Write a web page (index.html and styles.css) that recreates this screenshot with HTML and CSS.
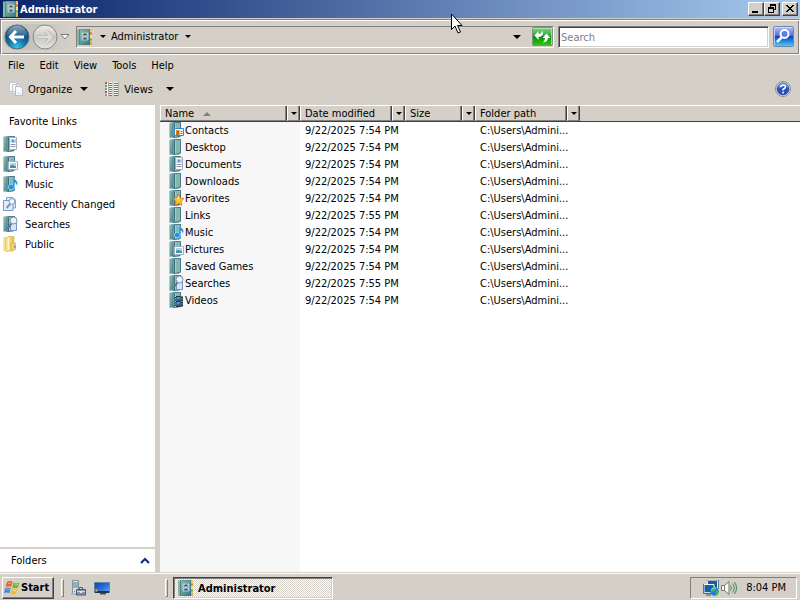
FILE: index.html
```html
<!DOCTYPE html>
<html lang="en">
<head>
<meta charset="utf-8">
<title>Administrator</title>
<link rel="stylesheet" href="styles.css">
</head>
<body>
<svg class="sprites" aria-hidden="true">
  <defs>
    <linearGradient id="teal" x1="0" y1="0" x2="1" y2="1"><stop offset="0" stop-color="#8dbdb2"/><stop offset=".5" stop-color="#5f9d93"/><stop offset="1" stop-color="#3f7088"/></linearGradient>
    <linearGradient id="teal2" x1="0" y1="0" x2="1" y2="1"><stop offset="0" stop-color="#86b3c0"/><stop offset="1" stop-color="#7fbd9c"/></linearGradient>
    <linearGradient id="yellow" x1="0" y1="0" x2="1" y2="0"><stop offset="0" stop-color="#fff0a8"/><stop offset="1" stop-color="#e6bf45"/></linearGradient>
    <radialGradient id="ball" cx=".5" cy=".95" r=".9"><stop offset="0" stop-color="#35c8ee"/><stop offset=".45" stop-color="#126fa5"/><stop offset="1" stop-color="#0b3768"/></radialGradient>
    <linearGradient id="shine" x1="0" y1="0" x2="0" y2="1"><stop offset="0" stop-color="#fff" stop-opacity=".85"/><stop offset="1" stop-color="#fff" stop-opacity=".15"/></linearGradient>
    <linearGradient id="grayball" x1="0" y1="0" x2="0" y2="1"><stop offset="0" stop-color="#eeeeec"/><stop offset=".5" stop-color="#c9c8c4"/><stop offset="1" stop-color="#e2e2df"/></linearGradient>
    <linearGradient id="green" x1="0" y1="0" x2="0" y2="1"><stop offset="0" stop-color="#82d982"/><stop offset=".45" stop-color="#2da83a"/><stop offset=".5" stop-color="#068a10"/><stop offset="1" stop-color="#35c516"/></linearGradient>
    <linearGradient id="blue" x1="0" y1="0" x2="0" y2="1"><stop offset="0" stop-color="#b4c4fa"/><stop offset=".45" stop-color="#4f70de"/><stop offset=".5" stop-color="#143cc4"/><stop offset="1" stop-color="#46d8f6"/></linearGradient>
    <linearGradient id="screen" x1="0" y1="0" x2="1" y2="1"><stop offset="0" stop-color="#123f9c"/><stop offset=".6" stop-color="#2e75dc"/><stop offset="1" stop-color="#6eb4f4"/></linearGradient>
    <g id="book">
      <path d="M0 1 3 0h9v14l-2 1.500H0z" fill="url(#teal)"/>
      <path d="M.5 1v14" stroke="#a5cfc2"/>
      <path d="M4 2 6 .5h5.500v13.500L6 15.500H4z" fill="url(#teal2)" stroke="#466f8c" stroke-width=".8"/>
      <path d="M5.500 1.500v13.500" stroke="#3d6d84"/><path d="M6.500 1.500v13" stroke="#b0d5c8" stroke-width=".7"/>
    </g>
  </defs>
  <symbol id="i-folder" viewBox="0 0 16 16"><use href="#book"/></symbol>
  <symbol id="i-contacts" viewBox="0 0 16 16">
    <use href="#book"/>
    <path d="M5.500 6.500h9v7h-9z" fill="#f5fbff" stroke="#2d8fd0"/><path d="M7 8h3.500v4.500H7z" fill="#f29420"/><path d="M8 9h1.500v1.500H8zM7 11.500h3.500v1H7z" fill="#7a4010"/><path d="M11.500 9.500h2m-2 2h2" stroke="#3f86bc"/>
  </symbol>
  <symbol id="i-documents" viewBox="0 0 16 16">
    <use href="#book"/>
    <path d="M6.500 1.500h7v12h-7z" fill="#fff" stroke="#a9adb8"/><path d="M7.500 4h2M7.500 6h1.500M7.500 8.500h5M7.500 10.500h5M12 4h1M12 6h1" stroke="#8b92a8"/><path d="M9 3.500h2.500v3H9z" fill="#4b9fe2"/>
  </symbol>
  <symbol id="i-pictures" viewBox="0 0 16 16">
    <use href="#book"/>
    <path d="M5.500 5.500h9v8h-9z" fill="#fff" stroke="#a4adb8"/><path d="M7 7h6v5H7z" fill="#a8d5f3"/><path d="M7 9.500 10 9l3 1.500V12H7z" fill="#4a8f98"/>
  </symbol>
  <symbol id="i-music" viewBox="0 0 16 16">
    <use href="#book"/>
    <ellipse cx="8.500" cy="11" rx="3.200" ry="2.800" fill="#1596e6" stroke="#bee3fb" stroke-width=".7"/><path d="M10 11V1.500c1 2 4.500 3 4.500 5.500 0 1-.5 2-1 2.500 0-2-1-3-2-3V11z" fill="#168fdd" stroke="#bee3fb" stroke-width=".4"/>
  </symbol>
  <symbol id="i-searches" viewBox="0 0 16 16">
    <use href="#book"/>
    <path d="M7.500 6.500h6v8h-6z" fill="#d7e5f9" stroke="#7394cb"/><path d="M8.500 7.500 4.500 12.500" stroke="#60708c" stroke-width="2"/><circle cx="10.500" cy="4.500" r="3.500" fill="#e8f3fb" stroke="#7c8ba6"/>
  </symbol>
  <symbol id="i-recent" viewBox="0 0 16 16">
    <path d="M3.500 1.500H10l2.500 2.500v8h-9z" fill="#d8e8fb" stroke="#7fa3d4"/><path d="M.5 4.500H8l2 3v7H.500z" fill="#e1edfc" stroke="#7498cf"/><path d="M7.500 7.500 3.500 12" stroke="#8393ad" stroke-width="2"/><circle cx="9" cy="5.500" r="2.800" fill="#f3f8fd" stroke="#8c9bb5"/>
  </symbol>
  <symbol id="i-public" viewBox="0 0 16 16">
    <path d="M0 1h5v14H0z" fill="url(#yellow)"/><path d="M3 2.500 5 .5h6v13L5 15.500H3z" fill="url(#yellow)" stroke="#ddba4a" stroke-width=".7"/><path d="M8 7h4.500v6.500L8 15.500z" fill="#f2d269" stroke="#d8ad38" stroke-width=".7"/><path d="M5.500 2v12" stroke="#fff9d6"/><path d="M11 9.500h1.500V12H11z" fill="#58a5d6"/>
  </symbol>
  <symbol id="i-favorites" viewBox="0 0 16 16">
    <use href="#book"/>
    <path d="m9.500 4 1.600 3.900 3.900.5-2.900 2.900.8 4-3.400-2-3.400 2 .8-4L4 8.400l3.900-.5z" fill="#ffc52e" stroke="#e8781c" stroke-width=".9"/><path d="m9.500 6 .8 2.700-2.800.5z" fill="#fff0a0"/>
  </symbol>
  <symbol id="i-videos" viewBox="0 0 16 16">
    <use href="#book"/>
    <path d="M6 4h8v11H6z" fill="#283747"/><path d="M7.500 5h4v4h-4zM7.500 10h4v4h-4z" fill="#5796cb"/><path d="M7.500 8l4-2v3h-4zM7.500 13l4-2v3h-4z" fill="#315c83"/><path d="M13 4v11M6.500 4v11" stroke="#d5e2e8" stroke-dasharray="1 1.500"/>
  </symbol>
  <symbol id="i-user" viewBox="0 0 16 16">
    <path d="M0 .5h3V16H0z" fill="#86b8a8"/><path d="M2.500 0H13v16H2.500z" fill="url(#teal)" stroke="#36697c" stroke-width=".6"/>
    <path d="M5 4h6v7H5z" fill="#8fc0dc" stroke="#c4dcde" stroke-width=".8"/><circle cx="8" cy="6.800" r="1.500" fill="#dcc19c"/><path d="M6.300 6.500q0-2 1.700-2t1.700 2q-1.700-1.200-3.400 0z" fill="#43392c"/><path d="M5.800 10.500q2.200-4 4.400 0z" fill="#2d5a88"/>
    <path d="M13 0h2v3h-2z" fill="#e1ca45"/><path d="M13 3h2v3h-2z" fill="#e46a3b"/><path d="M13 6h2v3h-2z" fill="#f3dd59"/><path d="M13 9h2v3h-2z" fill="#57b757"/><path d="M13 12h2v4h-2z" fill="#e0ae35"/><path d="M13.500 3h1.500M13.500 6h1.500M13.500 9h1.500M13.500 12h1.500" stroke="#fff" stroke-width=".7"/>
  </symbol>
  <symbol id="i-down" viewBox="0 0 8 4"><path d="M0 0h8L4 4z"/></symbol>
  <symbol id="i-smalldown" viewBox="0 0 6 3"><path d="M0 0h6L3 3z"/></symbol>
</svg>

<div class="desktop">
  <main class="window">
    <header class="titlebar">
      <svg class="icon"><use href="#i-user"/></svg>
      <h1>Administrator</h1>
      <div class="caption-buttons">
        <button class="caption raised" aria-label="Minimize"><svg viewBox="0 0 12 10" width="12" height="10" shape-rendering="crispEdges"><path d="M2 7h6v2H2z"/></svg></button>
        <button class="caption raised" aria-label="Restore"><svg viewBox="0 0 12 10" width="12" height="10" shape-rendering="crispEdges"><path d="M4 0h6v6H8V5h1V2H5v1H4zM2 3h6v6H2zM3 5v3h4V5z" fill-rule="evenodd"/></svg></button>
        <button class="caption raised close" aria-label="Close"><svg viewBox="0 0 12 10" width="12" height="10" shape-rendering="crispEdges"><path d="M2 1h2v1h1v1h2V2h1V1h2v1H9v1H8v1H7v1h1v1h1v1h1v1H8V7H7V6H5v1H4v1H2V7h1V6h1V5h1V4H4V3H3V2H2z"/></svg></button>
      </div>
    </header>

    <nav class="navigation" aria-label="Address">
      <div class="travel">
        <button class="plain" aria-label="Back"><svg width="26" height="26" viewBox="0 0 26 26"><circle cx="13" cy="13" r="12" fill="url(#ball)" stroke="#526c84"/><path d="M2.500 12a10.500 10.500 0 0 1 21 0q-10.500-3-21 0z" fill="url(#shine)" opacity=".65"/><path d="M12 7 6.500 13l5.500 6M7 13h13" fill="none" stroke="#fff" stroke-width="3"/></svg></button>
        <button class="plain" aria-label="Forward"><svg width="26" height="26" viewBox="0 0 26 26"><circle cx="13" cy="13" r="12" fill="url(#grayball)" stroke="#85878a"/><path d="m14 7 5.500 6-5.500 6M19 13H6" fill="none" stroke="#b4b3b0" stroke-width="4"/><path d="m14 7 5.500 6-5.500 6M19 13H6" fill="none" stroke="#dddcd9" stroke-width="2.500"/></svg></button>
        <button class="plain" aria-label="Recent pages"><svg width="10" height="6" viewBox="0 0 10 6"><path d="M1 .5h8L5 5z" fill="#fff" stroke="#77777c"/></svg></button>
      </div>
      <div class="address">
        <svg class="icon"><use href="#i-user"/></svg>
        <button class="plain" aria-label="Locations"><svg class="smalldown"><use href="#i-smalldown"/></svg></button>
        <a href="#">Administrator</a>
        <button class="plain" aria-label="Subfolders"><svg class="smalldown"><use href="#i-smalldown"/></svg></button>
        <button class="plain previous" aria-label="Previous locations"><svg class="down"><use href="#i-down"/></svg></button>
        <button class="plain" aria-label="Refresh"><svg width="21" height="19" viewBox="0 0 21 19"><rect x=".5" y=".5" width="20" height="18" rx="1" fill="url(#green)" stroke="#7a967a"/><path d="M1.500 1.500h18v16" fill="none" stroke="#c4f0c0" stroke-opacity=".7"/><path d="M2.500 8.500 6.500 4v3Q10 7 10.500 3 12.500 10 6.500 10v3zM18.500 11 14.500 6.500 10.500 11h2.500q0 2.500-2 4.500 4.500-.5 5-4.500z" fill="#fff"/></svg></button>
      </div>
      <input class="search sunken" type="search" placeholder="Search" aria-label="Search">
      <button class="plain" aria-label="Start search"><svg width="21" height="21" viewBox="0 0 21 21"><rect x=".5" y=".5" width="20" height="20" rx="1.500" fill="url(#blue)" stroke="#7784ab"/><path d="M1.500 19.500v-18h18" fill="none" stroke="#e1e9ff" stroke-opacity=".7"/><path d="M8.500 11.500 4 16" stroke="#fff" stroke-width="2.500"/><circle cx="11.500" cy="8" r="4" fill="#5a82dc" stroke="#fff" stroke-width="2"/></svg></button>
    </nav>

    <nav class="menubar" aria-label="Menu">
      <button class="plain">File</button><button class="plain">Edit</button><button class="plain">View</button><button class="plain">Tools</button><button class="plain">Help</button>
    </nav>

    <div class="toolbar">
      <button class="plain tool organize"><svg class="icon" viewBox="0 0 16 16"><path d="M1.500 1.500h7v9h-7zM4.500 3.500h7v9h-7z" fill="#f5f8fc" stroke="#c1c9d0"/><path d="M7.500 5.500h5l2 2v7h-7z" fill="#f5f9fd" stroke="#b2bdc9"/><path d="M9 12.500h4" stroke="#d2deea"/></svg><span>Organize</span><svg class="down"><use href="#i-down"/></svg></button>
      <button class="plain tool"><svg class="icon views" viewBox="0 0 16 16"><path d="M3 1h12v14H3z" fill="#f5f5f1"/><path d="M5 2.500h3M5 4.500h3M5 6.500h3M5 8.500h3M5 10.500h3M5 12.500h3M5 14.500h3M10 2.500h4M10 4.500h4M10 6.500h4M10 8.500h4M10 10.500h4M10 12.500h4M10 14.500h4" stroke="#77776f"/><path d="M4.500 1v14M9 1v14M14.500 1v14" stroke="#b0aca2"/><path d="M1 1h2v2H1zM1 10h2v2H1z" fill="#c9514b"/><path d="M1 4h2v2H1z" fill="#5cab69"/><path d="M1 7h2v2H1zM1 13h2v2H1z" fill="#6aa1c4"/></svg><span>Views</span><svg class="down far"><use href="#i-down"/></svg></button>
      <button class="plain help" aria-label="Help"><svg width="16" height="16" viewBox="0 0 16 16"><circle cx="8" cy="8" r="7.500" fill="#f2f2f3" stroke="#8a8b91"/><circle cx="8" cy="8" r="6" fill="#2751bb" stroke="#18388a" stroke-width=".7"/><path d="M2.500 7a5.500 5.500 0 0 1 11 0q-5-2-11 0z" fill="#7494df" opacity=".7"/><path d="M5.700 6.200q0-2.200 2.400-2.200t2.300 1.900Q10.400 7.200 8.100 8.300v1.200M8.100 10.800v1.700" fill="none" stroke="#fff" stroke-width="1.600"/></svg></button>
    </div>

    <div class="content">
      <aside class="sidebar">
        <h2>Favorite Links</h2>
        <ul>
          <li><a href="#"><svg class="icon"><use href="#i-documents"/></svg>Documents</a></li>
          <li><a href="#"><svg class="icon"><use href="#i-pictures"/></svg>Pictures</a></li>
          <li><a href="#"><svg class="icon"><use href="#i-music"/></svg>Music</a></li>
          <li><a href="#"><svg class="icon"><use href="#i-recent"/></svg>Recently Changed</a></li>
          <li><a href="#"><svg class="icon"><use href="#i-searches"/></svg>Searches</a></li>
          <li><a href="#"><svg class="icon"><use href="#i-public"/></svg>Public</a></li>
        </ul>
        <button class="plain folders"><span>Folders</span><svg width="10" height="7" viewBox="0 0 10 7"><path d="m1 6 4-4 4 4" fill="none" stroke="#0b2c8c" stroke-width="2"/></svg></button>
      </aside>
      <section class="files" aria-label="Files">
        <table>
          <colgroup><col class="c-name"><col class="c-date"><col class="c-size"><col class="c-path"><col></colgroup>
          <thead>
            <tr>
              <th><div class="heading"><button class="sort">Name<svg class="sorted" viewBox="0 0 8 4"><path d="M0 4h8L4 0z"/></svg></button><button class="filter" aria-label="Filter by name"><svg class="smalldown"><use href="#i-smalldown"/></svg></button></div></th>
              <th><div class="heading"><button class="sort">Date modified</button><button class="filter" aria-label="Filter by date"><svg class="smalldown"><use href="#i-smalldown"/></svg></button></div></th>
              <th><div class="heading"><button class="sort">Size</button><button class="filter" aria-label="Filter by size"><svg class="smalldown"><use href="#i-smalldown"/></svg></button></div></th>
              <th><div class="heading"><button class="sort">Folder path</button><button class="filter" aria-label="Filter by path"><svg class="smalldown"><use href="#i-smalldown"/></svg></button></div></th>
              <td><div class="heading"></div></td>
            </tr>
          </thead>
          <tbody>
            <tr><td><div class="file"><svg class="icon"><use href="#i-contacts"/></svg>Contacts</div></td><td>9/22/2025 7:54 PM</td><td></td><td>C:\Users\Admini...</td><td></td></tr>
            <tr><td><div class="file"><svg class="icon"><use href="#i-folder"/></svg>Desktop</div></td><td>9/22/2025 7:54 PM</td><td></td><td>C:\Users\Admini...</td><td></td></tr>
            <tr><td><div class="file"><svg class="icon"><use href="#i-documents"/></svg>Documents</div></td><td>9/22/2025 7:54 PM</td><td></td><td>C:\Users\Admini...</td><td></td></tr>
            <tr><td><div class="file"><svg class="icon"><use href="#i-folder"/></svg>Downloads</div></td><td>9/22/2025 7:54 PM</td><td></td><td>C:\Users\Admini...</td><td></td></tr>
            <tr><td><div class="file"><svg class="icon"><use href="#i-favorites"/></svg>Favorites</div></td><td>9/22/2025 7:54 PM</td><td></td><td>C:\Users\Admini...</td><td></td></tr>
            <tr><td><div class="file"><svg class="icon"><use href="#i-folder"/></svg>Links</div></td><td>9/22/2025 7:55 PM</td><td></td><td>C:\Users\Admini...</td><td></td></tr>
            <tr><td><div class="file"><svg class="icon"><use href="#i-music"/></svg>Music</div></td><td>9/22/2025 7:54 PM</td><td></td><td>C:\Users\Admini...</td><td></td></tr>
            <tr><td><div class="file"><svg class="icon"><use href="#i-pictures"/></svg>Pictures</div></td><td>9/22/2025 7:54 PM</td><td></td><td>C:\Users\Admini...</td><td></td></tr>
            <tr><td><div class="file"><svg class="icon"><use href="#i-folder"/></svg>Saved Games</div></td><td>9/22/2025 7:54 PM</td><td></td><td>C:\Users\Admini...</td><td></td></tr>
            <tr><td><div class="file"><svg class="icon"><use href="#i-searches"/></svg>Searches</div></td><td>9/22/2025 7:55 PM</td><td></td><td>C:\Users\Admini...</td><td></td></tr>
            <tr><td><div class="file"><svg class="icon"><use href="#i-videos"/></svg>Videos</div></td><td>9/22/2025 7:54 PM</td><td></td><td>C:\Users\Admini...</td><td></td></tr>
          </tbody>
        </table>
      </section>
    </div>
  </main>

  <footer class="taskbar">
    <button class="start raised"><svg class="icon" viewBox="0 0 16 16"><path d="M3 2q3-2 5.500 0L7 7Q4.500 5.300 1.500 7z" fill="#e8622a"/><path d="M9.500 2.500q3 1.500 6 0L14 7.500q-3 1.500-6 0z" fill="#76b82c"/><path d="M1.200 8.300q3-1.700 5.500 0L5.200 13.300q-2.500-1.700-5.200 0z" fill="#3d87d6"/><path d="M7.700 8.800q3 1.500 6 0l-1.500 5q-3 1.500-6 0z" fill="#f4bd24"/><path d="M4 3.500q2-1 3 0M10.500 4q2 .8 3.500.3M2.500 9.500q2-.8 3 0M9 10.300q2 .7 3 .3" fill="none" stroke="#fff" stroke-opacity=".5"/></svg>Start</button>
    <div class="grip"></div>
    <div class="quick">
      <button class="plain" aria-label="Server Manager"><svg class="icon" viewBox="0 0 16 16"><path d="M1.500.5h6v13h-6z" fill="#d7e3e7" stroke="#82959e"/><path d="M2 3h5M2 5h5M2 7h5" stroke="#5c7783"/><path d="M3 11h1v1H3z" fill="#3c9c49"/><path d="M0 13h6v2H0z" fill="#a8b8bf"/><path d="M8.500 9V7.500h3V9" fill="none" stroke="#50606e"/><path d="M5.500 9.500h9v5.500h-9z" fill="#8196ac" stroke="#4b5b6c"/><path d="M6 11.500h8" stroke="#ced7df"/><path d="M9 11h2v2H9z" fill="#e3e7ec"/></svg></button>
      <button class="plain" aria-label="Show desktop"><svg class="icon" viewBox="0 0 16 16"><path d="M.5 2.500h15v10H.5z" fill="url(#screen)" stroke="#6685a8"/><path d="M1 11h14v2H1z" fill="#1c344e"/><path d="M1.500 9.500h2v2h-2z" fill="#e6b634"/><path d="M2.500 9h1v1h-1z" fill="#58c03d"/><path d="M6 13h6v1.500H6z" fill="#3d5368"/></svg></button>
    </div>
    <div class="grip"></div>
    <button class="task"><svg class="icon"><use href="#i-user"/></svg>Administrator</button>
    <div class="tray">
      <svg class="icon" viewBox="0 0 16 16"><path d="M4.500.5h10v8h-10z" fill="#175c9e" stroke="#e6eef4"/><path d="M3.500 0h12v9" fill="none" stroke="#32506c" stroke-width=".7"/><path d="M1 4.500h10v8H1z" fill="#1460a8" stroke="#f3f7fa"/><path d="M.3 4v9.300h9M3 15h5" fill="none" stroke="#35556e"/><circle cx="11.500" cy="11.500" r="4.300" fill="#237ee2"/><path d="m9 8 3-1 1 2-2 2-3 .5zM13 11l3-1-1 4-2 1.500z" fill="#45bf2c"/><path d="M8 10q2-3 5-2" stroke="#8ad3fc" fill="none"/></svg>
      <svg class="icon" viewBox="0 0 16 16"><path d="M.5 5.500h3L8 1.500v13l-4.500-4h-3z" fill="#f8f8f8" stroke="#777"/><path d="M3.500 5.500v5" stroke="#777"/><path d="M9.500 5.500q2 2.500 0 5M11.500 3.500q3.500 4.500 0 9M13.500 2q4 6 0 12" fill="none" stroke="#388b53"/></svg>
      <time>8:04 PM</time>
    </div>
  </footer>
</div>
<svg class="cursor" width="12" height="21" viewBox="0 0 12 21" aria-hidden="true"><path d="M.5 1v15.500L4 13l3 7 2.500-1-3-6.500H11z" fill="#fff" stroke="#000"/></svg>
</body>
</html>
```

FILE: styles.css
```css
:root {
  --face: #d4d0c8;
  --shadow: #808080;
  --dark: #404040;
}

* { box-sizing: border-box; }

body {
  margin: 0;
  font: 11px/17px "DejaVu Sans Condensed", "DejaVu Sans", sans-serif;
  color: #000;
  background: var(--face);
}

button, input {
  font: inherit;
  color: inherit;
  margin: 0;
  border-radius: 0;
}

a { color: inherit; text-decoration: none; }
svg { display: block; flex: none; }

.sprites { position: absolute; width: 0; height: 0; }
.icon { width: 16px; height: 16px; }
.down { width: 8px; height: 4px; }
.smalldown { width: 6px; height: 3px; }

.plain {
  display: flex;
  align-items: center;
  padding: 0;
  border: 0;
  background: none;
}

.raised {
  background: var(--face);
  border: 1px solid;
  border-color: #fff var(--dark) var(--dark) #fff;
  box-shadow: inset -1px -1px var(--shadow);
}

.sunken {
  border: 1px solid;
  border-color: var(--shadow) #fff #fff var(--shadow);
  box-shadow: inset 1px 1px var(--dark), inset -1px -1px var(--face);
}

.desktop {
  display: flex;
  flex-direction: column;
  height: 100vh;
}

.window {
  display: flex;
  flex-direction: column;
  flex: 1;
  min-height: 0;
}

.titlebar {
  display: flex;
  align-items: center;
  gap: 1px;
  height: 18px;
  margin-bottom: 1px;
  padding: 0 2px 0 3px;
  color: #fff;
  background: linear-gradient(90deg, #0a246a, #a6caf0);
}

.titlebar h1 {
  margin: 0;
  font-size: 11px;
  font-weight: bold;
}

.caption-buttons { display: flex; margin-left: auto; }

.caption {
  width: 16px;
  height: 14px;
  padding: 1px;
}

.close { margin-left: 2px; }

.navigation {
  display: flex;
  align-items: center;
  gap: 4px;
  height: 36px;
  padding: 0 5px 1px 2px;
  border: 1px solid;
  border-color: var(--shadow) #fff #fff var(--shadow);
  box-shadow: inset 1px 1px #fff, inset -1px -1px var(--shadow);
}

.travel {
  display: flex;
  align-items: center;
  gap: 2px;
  width: 69px;
  height: 26px;
  padding-left: 1px;
  border-radius: 13px;
  background: linear-gradient(90deg, #c1beb8, #c9c6bf 60%, var(--face));
}

.address {
  display: flex;
  align-items: center;
  gap: 7px;
  flex: 1;
  height: 22px;
  border: 1px solid;
  border-color: var(--shadow) #fff #fff var(--shadow);
}

.address a { margin-left: -2px; }
.previous { margin-left: auto; margin-right: 4px; }

.search {
  width: 211px;
  height: 22px;
  padding: 3px 2px 2px;
  background: #fff;
  appearance: none;
}

.search::placeholder { color: #808080; opacity: 1; }

.menubar {
  display: flex;
  gap: 15px;
  height: 20px;
  padding-left: 8px;
}

.toolbar {
  display: flex;
  align-items: center;
  gap: 16px;
  height: 30px;
  padding: 0 9px 2px 8px;
}

.tool { gap: 4px; }
.tool .down { margin-left: 4px; }
.tool .far { margin-left: 9px; }
.help { margin-left: auto; }

.content {
  display: grid;
  grid-template-columns: 155px 1fr;
  gap: 5px;
  flex: 1;
  min-height: 0;
}

.sidebar {
  display: flex;
  flex-direction: column;
  background: #fff;
}

.sidebar h2 {
  margin: 8px 9px 4px;
  font-size: 11px;
  font-weight: normal;
}

.sidebar ul { margin: 0; padding: 0; list-style: none; }

.sidebar a {
  display: flex;
  align-items: center;
  gap: 6px;
  height: 20px;
  padding-left: 3px;
}

.folders {
  justify-content: space-between;
  height: 25px;
  margin-top: auto;
  padding: 0 5px 0 11px;
  border-top: 2px solid var(--face);
}

.files {
  overflow: hidden;
  background: linear-gradient(90deg, #f7f7f7 140px, #fff 140px);
}

table {
  width: 100%;
  table-layout: fixed;
  border-collapse: collapse;
}

.c-name { width: 140px; }
.c-date, .c-path { width: 105px; }
.c-size { width: 70px; }

th, td {
  padding: 0;
  text-align: left;
  font-weight: normal;
  white-space: nowrap;
}

tbody td { height: 17px; padding: 1px 0 0 5px; line-height: 16px; }
tbody td:first-child { padding: 0 0 0 9px; }

.heading {
  display: flex;
  height: 17px;
  background: var(--face);
  border-top: 1px solid #fff;
  border-bottom: 1px solid var(--dark);
}

.sort, .filter {
  display: flex;
  align-items: center;
  padding: 0;
  background: var(--face);
  border: solid;
  border-width: 0 1px 1px;
  border-color: #fff var(--dark) var(--shadow) #fff;
  box-shadow: inset -1px 0 var(--shadow);
}

.sort { flex: 1; padding: 1px 0 0 4px; }
.filter { width: 13px; justify-content: center; }

.sorted {
  width: 8px;
  height: 4px;
  margin-left: 9px;
  fill: var(--shadow);
}

.file { display: flex; height: 17px; line-height: 18px; }

.taskbar {
  display: flex;
  align-items: center;
  height: 28px;
  padding: 2px 3px 0 2px;
  background: var(--face);
  border-top: 1px solid var(--face);
  box-shadow: inset 0 1px #fff;
}

.start {
  display: flex;
  align-items: center;
  gap: 1px;
  width: 52px;
  height: 22px;
  padding: 0 1px;
  font-weight: bold;
}

.grip {
  width: 3px;
  height: 18px;
  margin: 0 5px 0 7px;
  border: 1px solid;
  border-color: #fff var(--shadow) var(--shadow) #fff;
}

.quick {
  display: flex;
  gap: 7px;
  width: 89px;
  padding-left: 2px;
}

.task {
  display: flex;
  align-items: center;
  gap: 4px;
  width: 160px;
  height: 22px;
  padding: 1px 4px 0;
  font-weight: bold;
  border: 1px solid;
  border-color: var(--dark) #fff #fff var(--dark);
  box-shadow: inset 1px 1px var(--shadow), inset -1px -1px var(--face);
  background: repeating-conic-gradient(#fff 0 25%, var(--face) 0 50%) 0 0 / 2px 2px;
}

.tray {
  display: flex;
  align-items: center;
  gap: 2px;
  width: 107px;
  height: 22px;
  margin-left: auto;
  padding: 0 10px 0 12px;
  border: 1px solid;
  border-color: var(--shadow) #fff #fff var(--shadow);
}

.tray time { margin-left: auto; }

.cursor { position: absolute; left: 451px; top: 13px; }
```
